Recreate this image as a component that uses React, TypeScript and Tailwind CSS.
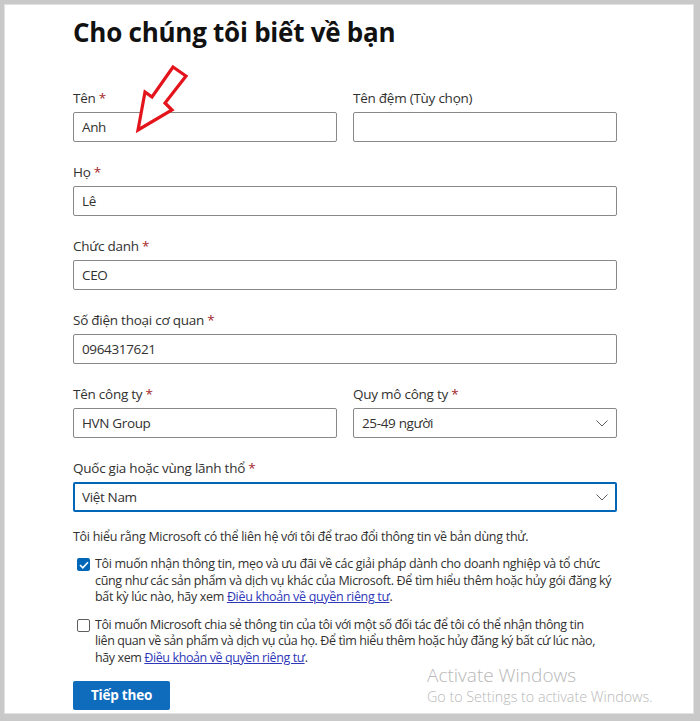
import React from "react";

const FONT = { fontFamily: '"Open Sans", "Noto Sans", sans-serif' };

function Label({ text, req = true }: { text: string; req?: boolean }) {
  return (
    <div className="text-[13.5px] tracking-[-0.25px] leading-[20px] text-[#323130] mb-[4px] whitespace-nowrap">
      {text}
      {req && <span className="text-[#a4262c]"> *</span>}
    </div>
  );
}

function Input({ value }: { value?: string }) {
  return (
    <div className="h-[30px] border border-[#8a8886] rounded-[2px] bg-white px-[8px] flex items-center text-[13.5px] tracking-[-0.35px] text-[#323130]">
      {value}
    </div>
  );
}

function Chevron() {
  return (
    <svg width="12" height="7" viewBox="0 0 12 7" className="shrink-0">
      <path d="M0.5 0.5 L6 6 L11.5 0.5" fill="none" stroke="#605e5c" strokeWidth="1" />
    </svg>
  );
}

function Select({ value, focused = false }: { value: string; focused?: boolean }) {
  return (
    <div
      className={
        focused
          ? "h-[30px] border-2 border-[#0067b8] rounded-[2px] bg-white pl-[7px] pr-[7px] flex items-center justify-between text-[13.5px] tracking-[-0.35px] text-[#323130]"
          : "h-[30px] border border-[#8a8886] rounded-[2px] bg-white pl-[8px] pr-[8px] flex items-center justify-between text-[13.5px] tracking-[-0.35px] text-[#323130]"
      }
    >
      <span>{value}</span>
      <Chevron />
    </div>
  );
}

function Link({ children }: { children: React.ReactNode }) {
  return <span className="text-[#2e37b8] underline">{children}</span>;
}

export default function App() {
  return (
    <div className="relative w-[700px] h-[721px] bg-[#c9c9c9] pt-[4px] pl-[4px] pr-[6px] pb-[7px]" style={FONT}>
      <div className="h-full bg-white border border-[#e2e2e2] pl-[68px] pt-[9px]">
        <h1 className="text-[26px] tracking-[-0.25px] leading-[36px] font-bold text-[#111111] whitespace-nowrap">
          Cho chúng tôi biết về bạn
        </h1>

        <div className="w-[544px] mt-[38px] flex flex-col gap-[20px]">
          <div className="grid grid-cols-2 gap-[16px]">
            <div>
              <Label text="Tên" />
              <Input value="Anh" />
            </div>
            <div>
              <Label text="Tên đệm (Tùy chọn)" req={false} />
              <Input />
            </div>
          </div>
          <div>
            <Label text="Họ" />
            <Input value="Lê" />
          </div>
          <div>
            <Label text="Chức danh" />
            <Input value="CEO" />
          </div>
          <div>
            <Label text="Số điện thoại cơ quan" />
            <Input value="0964317621" />
          </div>
          <div className="grid grid-cols-2 gap-[16px]">
            <div>
              <Label text="Tên công ty" />
              <Input value="HVN Group" />
            </div>
            <div>
              <Label text="Quy mô công ty" />
              <Select value="25-49 người" />
            </div>
          </div>
          <div>
            <Label text="Quốc gia hoặc vùng lãnh thổ" />
            <Select value="Việt Nam" focused />
          </div>
        </div>

        <p className="mt-[16px] text-[12.5px] tracking-[-0.28px] leading-[18px] text-[#323130] whitespace-nowrap">
          Tôi hiểu rằng Microsoft có thể liên hệ với tôi để trao đổi thông tin về bản dùng thử.
        </p>

        <div className="mt-[10px] flex items-start gap-[5px] pl-[4px] text-[12.5px] tracking-[-0.32px] leading-[16.5px] text-[#323130] whitespace-nowrap">
          <div className="mt-[2px] w-[13px] h-[13px] rounded-[2px] bg-[#0067b8] flex items-center justify-center shrink-0">
            <svg width="10" height="8" viewBox="0 0 10 8">
              <path d="M1 4 L3.8 6.8 L9 1.2" fill="none" stroke="#ffffff" strokeWidth="1.6" />
            </svg>
          </div>
          <div>
            Tôi muốn nhận thông tin, mẹo và ưu đãi về các giải pháp dành cho doanh nghiệp và tổ chức
            <br />
            cũng như các sản phẩm và dịch vụ khác của Microsoft. Để tìm hiểu thêm hoặc hủy gói đăng ký
            <br />
            bất kỳ lúc nào, hãy xem <Link>Điều khoản về quyền riêng tư</Link>.
          </div>
        </div>

        <div className="mt-[11px] flex items-start gap-[5px] pl-[4px] text-[12.5px] tracking-[-0.4px] leading-[16.5px] text-[#323130] whitespace-nowrap">
          <div className="mt-[2px] w-[13px] h-[13px] rounded-[2px] border border-[#605e5c] bg-white shrink-0" />
          <div>
            Tôi muốn Microsoft chia sẻ thông tin của tôi với một số đối tác để tôi có thể nhận thông tin
            <br />
            liên quan về sản phẩm và dịch vụ của họ. Để tìm hiểu thêm hoặc hủy đăng ký bất cứ lúc nào,
            <br />
            hãy xem <Link>Điều khoản về quyền riêng tư</Link>.
          </div>
        </div>

        <button className="mt-[15px] w-[97px] h-[29px] bg-[#0f6cbd] text-white text-[13.5px] tracking-[-0.2px] font-bold rounded-[2px]">
          Tiếp theo
        </button>
      </div>

      <svg className="absolute left-0 top-0 pointer-events-none" width="700" height="721">
        <polygon
          points="173,67 186,76 165,103 172,110 138,130 145,92 152,97"
          fill="#ffffff"
          stroke="#e3141b"
          strokeWidth="3.2"
          strokeLinejoin="miter"
        />
      </svg>

      <div className="absolute left-[427px] top-[663px] pointer-events-none text-[#b8b8b8] font-light">
        <div className="text-[19px] leading-[24px]">Activate Windows</div>
        <div className="text-[14.3px] leading-[20px]">Go to Settings to activate Windows.</div>
      </div>
    </div>
  );
}
